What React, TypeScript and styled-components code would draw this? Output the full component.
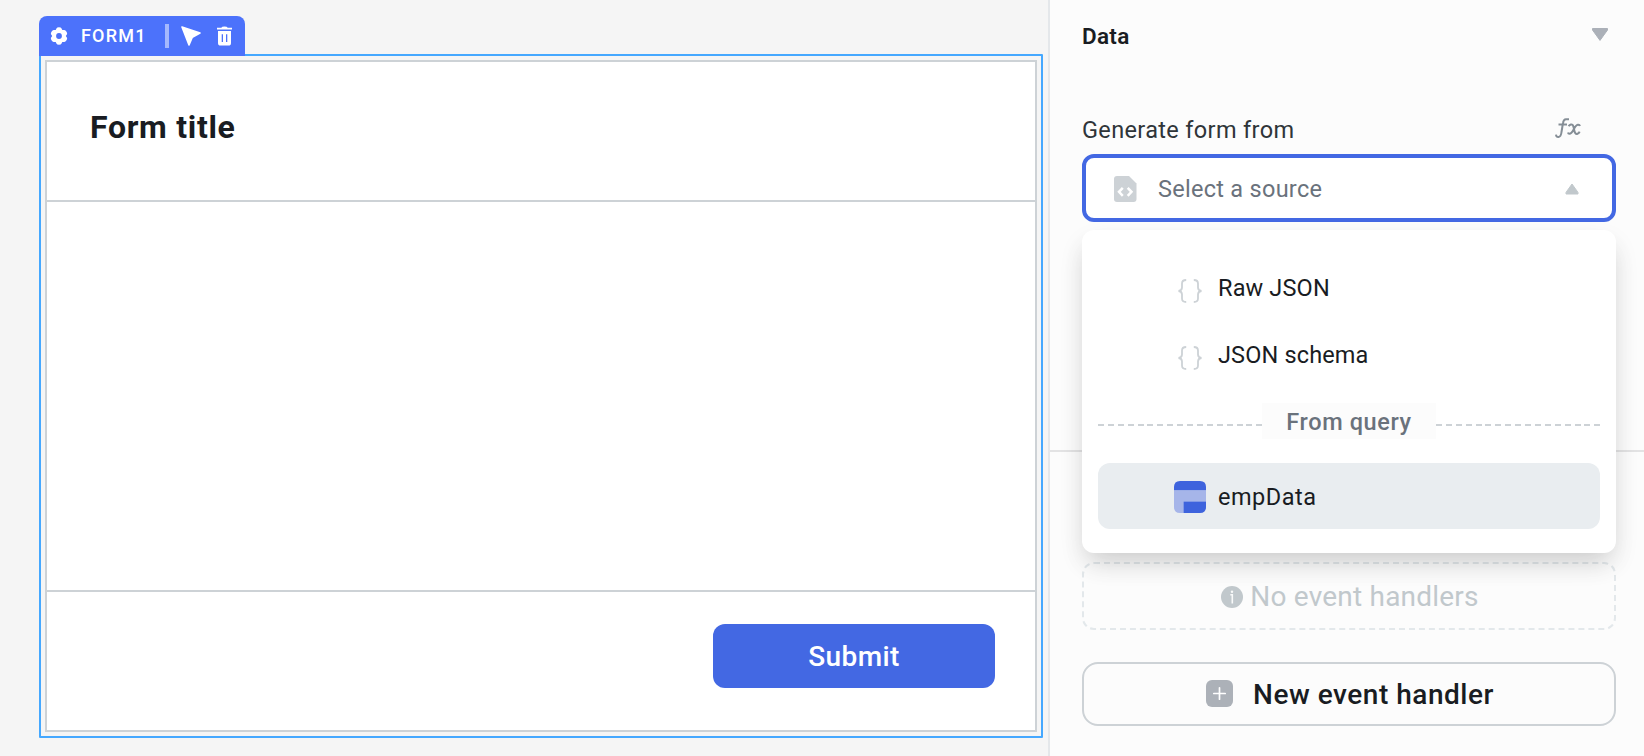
import React, { ReactElement, ReactNode } from 'react'
import styled, { createGlobalStyle } from 'styled-components';

const GlobalStyle = createGlobalStyle `
    * {
        box-sizing : border-box;
    }

    body {
        margin : 0;
        overflow : hidden;
        font-family : Roboto, "Liberation Sans", sans-serif;
        color : #191c22;
    }

    svg {
        display : block;
        flex : none;
    }
`;

const StyledEditor = styled.div `
    display : flex;
    width : 1644px;
    height : 756px;
    overflow : hidden;
    background-color : #f5f5f5;
`;

const StyledCanvas = styled.div `
    flex : none;
    width : 1048px;
    padding : 16px 5px 0 39px;
`;

const StyledTag = styled.div `
    display : flex;
    align-items : center;
    width : 206px;
    height : 38px;
    padding : 2px 12px 0 11px;
    border-radius : 8px 8px 0 0;
    background-color : #4c72fb;
    color : white;
`;

const StyledTagName = styled.div `
    width : 84px;
    margin-left : 13px;
`;

const StyledTagDivider = styled.div `
    width : 4px;
    height : 24px;
    margin-right : 12px;
    background-color : #a5b8fd;
`;

const StyledTagActions = styled.div `
    display : flex;
    align-items : center;
    gap : 16px;
`;

const StyledSelection = styled.div `
    position : relative;
    height : 684px;
    padding : 4px;
    border : 2px solid #45a8ff;
    border-radius : 1px;

    /* the tag overlaps the top border of the widget */
    &::before {
        content : '';
        position : absolute;
        top : -2px;
        left : -2px;
        width : 206px;
        height : 2px;
        background-color : #4c72fb;
    }
`;

const StyledForm = styled.div `
    display : flex;
    flex-direction : column;
    height : 672px;
    border : 2px solid #cdd2d6;
    background-color : white;
`;

const StyledFormHeader = styled.div `
    height : 140px;
    padding : 45px 0 0 43px;
    border-bottom : 2px solid #cdd2d6;
`;

const StyledFormFooter = styled.div `
    display : flex;
    justify-content : flex-end;
    height : 140px;
    margin-top : auto;
    padding : 32px 40px 0 0;
    border-top : 2px solid #cdd2d6;
`;

const StyledSubmit = styled.button `
    width : 282px;
    height : 64px;
    padding : 2px 0 0;
    border : none;
    border-radius : 12px;
    background-color : #4368e3;
    color : white;
    font-family : inherit;
`;

interface TextProps {
    $size : number;
    $weight? : number;
    $spacing? : number;
    $color? : string;
}

const Text = styled.span<TextProps> `
    display : inline-block;
    white-space : nowrap;
    line-height : 40px;
    font-size : ${p => p.$size}px;
    font-weight : ${p => p.$weight || 400};
    letter-spacing : ${p => p.$spacing || 0}px;
    color : ${p => p.$color || 'inherit'};
`;

const StyledPanel = styled.div `
    flex : 1;
    border-left : 2px solid #e4e7ea;
    background-color : #fcfcfc;
`;

const StyledSection = styled.div `
    position : relative;
    height : 452px;
    padding : 16px 28px 0 32px;
    border-bottom : 2px solid #e3e3e4;
`;

const StyledSectionTitle = styled.div `
    display : flex;
    justify-content : space-between;
    height : 94px;
    padding-right : 8px;

    svg {
        margin-top : 12px;
    }
`;

const StyledLabel = styled.div `
    display : flex;
    justify-content : space-between;
    height : 44px;
    padding-right : 35px;

    svg {
        margin-top : 8px;
    }
`;

const StyledSelect = styled.div `
    display : flex;
    align-items : center;
    width : 534px;
    height : 68px;
    padding : 2px 33px 0 28px;
    border : 4px solid #4368e3;
    border-radius : 12px;
    background-color : white;

    svg:first-child {
        margin-right : 21px;
    }

    svg:last-child {
        margin-left : auto;
    }
`;

const StyledMenu = styled.div `
    position : absolute;
    z-index : 1;
    top : 230px;
    left : 32px;
    width : 534px;
    height : 323px;
    padding : 24px 16px;
    border-radius : 12px;
    background-color : white;
    box-shadow : 0 12px 28px -6px rgba(0, 0, 0, 0.19), 0 14px 26px rgba(0, 0, 0, 0.04);
`;

const StyledOption = styled.div<{ $active? : boolean }> `
    display : flex;
    align-items : center;
    height : ${p => p.$active ? 66 : 67}px;
    padding : ${p => p.$active ? 2 : 0}px 0 0 76px;
    border-radius : 12px;
    background-color : ${p => p.$active ? '#e9edf0' : 'transparent'};
`;

const StyledOptionIcon = styled.div<{ $drop? : number }> `
    display : flex;
    justify-content : center;
    width : 32px;
    margin-right : 12px;
    padding-top : ${p => p.$drop || 0}px;
`;

const StyledSeparator = styled.div `
    display : flex;
    align-items : center;
    height : 36px;
    margin : 15px 0 24px;
`;

const StyledSeparatorLabel = styled.div `
    display : flex;
    align-items : center;
    justify-content : center;
    width : 174px;
    height : 36px;
    padding-top : 2px;
    background-color : #fcfcfc;
`;

const StyledDash = styled.div `
    flex : 1;
    height : 2px;
    margin-top : 8px;
    background : repeating-linear-gradient(90deg, #cdd2d6 0 6px, transparent 6px 9.9px);
`;

const StyledEvents = styled.div `
    padding : 110px 28px 0 32px;
`;

const StyledEmpty = styled.div `
    display : flex;
    align-items : center;
    justify-content : center;
    gap : 7px;
    width : 534px;
    height : 68px;
    padding : 2px 0 0 2px;
    border : 2px dashed #e3e8eb;
    border-radius : 12px;
    color : #c1c8cc;
`;

const StyledNewHandler = styled.button `
    display : flex;
    align-items : center;
    gap : 20px;
    width : 534px;
    height : 64px;
    margin-top : 32px;
    padding : 1px 0 0 122px;
    border : 2px solid #cdd2d6;
    border-radius : 16px;
    background-color : transparent;
    color : #191c22;
    font-family : inherit;

    svg {
        margin-bottom : 2px;
    }
`;

function GearIcon() : ReactElement {
    return (
        <svg width="18" height="18" viewBox="0 0 18 18">
            <path
                d="M5.7 3 L6.6 1.2 Q7 .2 9 .2 Q11 .2 11.4 1.2 L12.3 3 L14.3 3 Q15.5 3 16.5 4.7 Q17.5 6.5 17 7.3 L15.8 9 L17 10.7 Q17.5 11.6 16.5 13.3 Q15.5 15 14.3 15 L12.3 15 L11.4 16.8 Q11 17.8 9 17.8 Q7 17.8 6.6 16.8 L5.7 15 L3.7 15 Q2.5 15 1.5 13.3 Q.5 11.6 1 10.7 L2.2 9 L1 7.3 Q.5 6.5 1.5 4.7 Q2.5 3 3.7 3 Z M9 6.1 A2.9 2.9 0 1 0 9 11.9 A2.9 2.9 0 1 0 9 6.1 Z"
                fill="white"
                fillRule="evenodd"
            />
        </svg>
    )
};

function CursorIcon() : ReactElement {
    return (
        <svg width="20" height="20" viewBox="0 0 20 20">
            <path d="M1 1 L19 7 L11.3 11.2 L8 19 Z" fill="white" stroke="white" strokeWidth="1.6" strokeLinejoin="round" />
        </svg>
    )
};

function TrashIcon() : ReactElement {
    return (
        <svg width="15" height="20" viewBox="0 0 15 20">
            <path d="M0 1.8 H4.3 Q4.8 .4 7.5 .4 Q10.2 .4 10.7 1.8 H15 V3.6 H0 Z" fill="white" />
            <path d="M1 5 H14 V17 Q14 19.6 11.4 19.6 H3.6 Q1 19.6 1 17 Z M4.7 8.3 V16 H6 V8.3 Z M9 8.3 V16 H10.3 V8.3 Z" fill="white" fillRule="evenodd" />
        </svg>
    )
};

function Caret({ up } : { up? : boolean }) : ReactElement {
    return up ? (
        <svg width="14" height="12" viewBox="0 0 14 12">
            <path d="M7 1 L13 9.4 V11 H1 V9.4 Z" fill="#c1c8cc" stroke="#c1c8cc" strokeLinejoin="round" />
        </svg>
    ) : (
        <svg width="16" height="13" viewBox="0 0 16 13">
            <path d="M.5 .5 H15.5 V2 L8 12.4 L.5 2 Z" fill="#abb0b8" stroke="#abb0b8" strokeLinejoin="round" />
        </svg>
    )
};

function FxIcon() : ReactElement {
    return (
        <svg width="26" height="21" viewBox="0 0 26 21" fill="none" stroke="#858e96" strokeWidth="2">
            <path d="M1 16.6 Q1.2 19.3 3.6 19 Q6 18.7 6.5 14 L8 5 Q8.5 1.2 11 1.2 H14 M3.5 6.4 H12" />
            <path d="M13.5 8.2 Q16 5.2 17.8 7.2 Q18.4 8 19 11 Q19.8 16.8 22.5 15.8 Q24 15.4 24.6 13.6 M25 8 Q24.5 6.4 22.8 6.7 Q21 7 18.8 11.2 Q16.5 15.7 14.4 15.8 Q13.2 15.8 13 14.5" />
        </svg>
    )
};

function SourceIcon() : ReactElement {
    return (
        <svg width="23" height="26" viewBox="0 0 23 26">
            <path d="M3 0 H15 L22.5 7.4 V23 Q22.5 26 19.5 26 H3 Q0 26 0 23 V3 Q0 0 3 0 Z" fill="#cdd2d6" />
            <path d="M8.8 11.8 L5 15.8 L8.8 19.8 M13.7 11.8 L17.5 15.8 L13.7 19.8" fill="none" stroke="white" strokeWidth="2.5" />
        </svg>
    )
};

function BracesIcon() : ReactElement {
    return (
        <svg width="24" height="24" viewBox="0 0 24 24" fill="none" stroke="#cdd2d6" strokeWidth="1.8">
            <path d="M8.2 1 Q4 1 4 4.5 V8.5 Q4 11.6 .5 12 Q4 12.4 4 15.5 V19.5 Q4 23 8.2 23" />
            <path d="M15.8 1 Q20 1 20 4.5 V8.5 Q20 11.6 23.5 12 Q20 12.4 20 15.5 V19.5 Q20 23 15.8 23" />
        </svg>
    )
};

function QueryIcon() : ReactElement {
    return (
        <svg width="32" height="32" viewBox="0 0 32 32">
            <path d="M0 9.5 V6 Q0 0 6 0 H26 Q32 0 32 6 V9.5 Z" fill="#3e63dd" />
            <path d="M0 9.5 H32 V20.5 H9.5 V32 H6 Q0 32 0 26 Z" fill="#a6b5e9" />
            <path d="M9.5 20.5 H32 V26 Q32 32 26 32 H9.5 Z" fill="#3e63dd" />
        </svg>
    )
};

function InfoIcon() : ReactElement {
    return (
        <svg width="22" height="22" viewBox="0 0 22 22">
            <circle cx="11" cy="11" r="11" fill="#c1c8cc" />
            <path d="M9.3 8.8 H11.3 V17.5" fill="none" stroke="#f9fafa" strokeWidth="1.6" />
            <circle cx="11" cy="5.7" r="1.2" fill="#f9fafa" />
        </svg>
    )
};

function PlusIcon() : ReactElement {
    return (
        <svg width="27" height="27" viewBox="0 0 27 27">
            <rect width="27" height="27" rx="6" fill="#acb1b8" />
            <path d="M13.5 7.8 V19.2 M7.8 13.5 H19.2" stroke="white" strokeWidth="1.7" strokeLinecap="round" />
        </svg>
    )
};

interface OptionProps {
    icon : ReactNode;
    label : string;
    active? : boolean;
    drop? : number;
    spacing? : number;
}

function Option({ icon, label, active, drop, spacing } : OptionProps) : ReactElement {
    return (
        <StyledOption $active={active}>
            <StyledOptionIcon $drop={drop}>{icon}</StyledOptionIcon>
            <Text $size={23.5} $spacing={spacing}>{label}</Text>
        </StyledOption>
    )
};

const jsonOptions = ['Raw JSON', 'JSON schema'];

function Canvas() : ReactElement {
    return (
        <StyledCanvas>
            <StyledTag>
                <GearIcon />
                <StyledTagName>
                    <Text $size={18} $weight={500} $spacing={1.2}>FORM1</Text>
                </StyledTagName>
                <StyledTagDivider />
                <StyledTagActions>
                    <CursorIcon />
                    <TrashIcon />
                </StyledTagActions>
            </StyledTag>
            <StyledSelection>
                <StyledForm>
                    <StyledFormHeader>
                        <Text $size={32} $weight={700} $spacing={0.7}>Form title</Text>
                    </StyledFormHeader>
                    <StyledFormFooter>
                        <StyledSubmit><Text $size={28} $weight={500} $spacing={0.4}>Submit</Text></StyledSubmit>
                    </StyledFormFooter>
                </StyledForm>
            </StyledSelection>
        </StyledCanvas>
    )
};

function Inspector() : ReactElement {
    return (
        <StyledPanel>
            <StyledSection>
                <StyledSectionTitle>
                    <Text $size={22.5} $weight={600} $spacing={0.3}>Data</Text>
                    <Caret />
                </StyledSectionTitle>
                <StyledLabel>
                    <Text $size={23.5} $spacing={0.35} $color="#2f3539">Generate form from</Text>
                    <FxIcon />
                </StyledLabel>
                <StyledSelect>
                    <SourceIcon />
                    <Text $size={23.5} $spacing={0.28} $color="#6a727c">Select a source</Text>
                    <Caret up />
                </StyledSelect>
                <StyledMenu>
                    {
                        jsonOptions.map((elem : string) => <Option key={elem} icon={<BracesIcon />} label={elem} drop={7} spacing={0.15} />)
                    }
                    <StyledSeparator>
                        <StyledDash />
                        <StyledSeparatorLabel>
                            <Text $size={23.5} $weight={500} $spacing={0.6} $color="#6a727c">From query</Text>
                        </StyledSeparatorLabel>
                        <StyledDash />
                    </StyledSeparator>
                    <Option icon={<QueryIcon />} label="empData" active spacing={0.5} />
                </StyledMenu>
            </StyledSection>
            <StyledEvents>
                <StyledEmpty>
                    <InfoIcon />
                    <Text $size={28} $spacing={0.2}>No event handlers</Text>
                </StyledEmpty>
                <StyledNewHandler>
                    <PlusIcon />
                    <Text $size={28} $weight={500} $spacing={0.52}>New event handler</Text>
                </StyledNewHandler>
            </StyledEvents>
        </StyledPanel>
    )
};

function App() : ReactElement {
    return (
        <StyledEditor>
            <GlobalStyle />
            <Canvas />
            <Inspector />
        </StyledEditor>
    )
}

export default App
